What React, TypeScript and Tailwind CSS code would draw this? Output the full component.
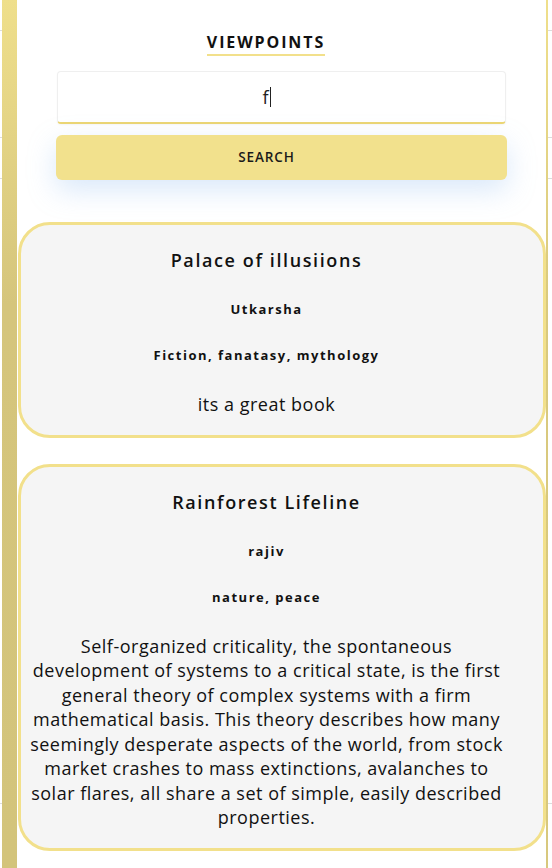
import React from "react";

type Review = {
  title: string;
  author: string;
  genres: string;
  body: string;
};

const reviews: Review[] = [
  {
    title: "Palace of illusiions",
    author: "Utkarsha",
    genres: "Fiction, fanatasy, mythology",
    body: "its a great book",
  },
  {
    title: "Rainforest Lifeline",
    author: "rajiv",
    genres: "nature, peace",
    body: "Self-organized criticality, the spontaneous development of systems to a critical state, is the first general theory of complex systems with a firm mathematical basis. This theory describes how many seemingly desperate aspects of the world, from stock market crashes to mass extinctions, avalanches to solar flares, all share a set of simple, easily described properties.",
  },
];

const EdgeMarks = ({ width }: { width: string }) => (
  <div className={`${width} flex flex-col shrink-0`}>
    <div className="h-[1px] bg-[#dcdcdc] mt-[30px]" />
    <div className="h-[1px] bg-[#dcdcdc] mt-[106px]" />
    <div className="h-[1px] bg-[#dcdcdc] mt-[40px]" />
    <div className="h-[1px] bg-[#dcdcdc] mt-[624px]" />
  </div>
);

const ReviewCard = ({ review }: { review: Review }) => (
  <div className="ml-[1px] border-[3px] border-[#f2e08b] rounded-[32px] bg-[#f5f5f5] pt-[23px] pb-[18px] pl-[8px] pr-[39px] flex flex-col items-center text-center gap-[28px] text-[#111]">
    <h3 className="text-[18px] leading-[24px] font-semibold tracking-[1.6px]">
      {review.title}
    </h3>
    <p className="text-[13px] leading-[18px] font-bold tracking-[1.5px]">
      {review.author}
    </p>
    <p className="text-[13px] leading-[18px] font-bold tracking-[1.5px]">
      {review.genres}
    </p>
    <p className="text-[18px] leading-[24.5px] tracking-[0.5px]">{review.body}</p>
  </div>
);

export default function App() {
  return (
    <div
      className="flex h-[868px] w-[552px] overflow-hidden bg-white"
      style={{ fontFamily: '"Open Sans", "Noto Sans", sans-serif' }}
    >
      <EdgeMarks width="w-[2px]" />
      <div className="w-[15px] shrink-0 bg-linear-to-b from-[#efdf8b] via-[#d5c57c] via-[35%] to-[#d3c47b]" />

      <main className="w-[529px] shrink-0 flex flex-col">
        <div className="flex justify-center pr-[31px] pt-[32px]">
          <h1 className="text-[16px] leading-[20px] font-bold tracking-[1.9px] text-[#111] border-b-2 border-[#f2e08b] pb-[2px]">
            VIEWPOINTS
          </h1>
        </div>

        <div className="mx-[40px] mt-[15px] h-[53px] rounded-[4px] border border-[#efefef] border-b-2 border-b-[#ecd673] bg-white flex items-center justify-center pr-[30px] shadow-[0_1px_2px_rgba(0,0,0,0.04)]">
          <span className="text-[18px] text-[#222]">f</span>
          <span className="w-[1px] h-[20px] bg-[#222] ml-[1px]" />
        </div>

        <button className="mx-[39px] mt-[11px] h-[45px] rounded-[6px] bg-[#f2e18d] pr-[30px] text-[13.5px] font-semibold tracking-[0.9px] text-[#1a1a1a] shadow-[0_10px_28px_rgba(147,190,240,0.35)]">
          SEARCH
        </button>

        <div className="mt-[42px] flex flex-col gap-[26px]">
          {reviews.map((r) => (
            <ReviewCard key={r.title} review={r} />
          ))}
        </div>
      </main>

      <div className="w-[2px] shrink-0 bg-linear-to-b from-[#efdf8b] via-[#d9c97e] via-[35%] to-[#d8c87d]" />
      <EdgeMarks width="w-[4px]" />
    </div>
  );
}
